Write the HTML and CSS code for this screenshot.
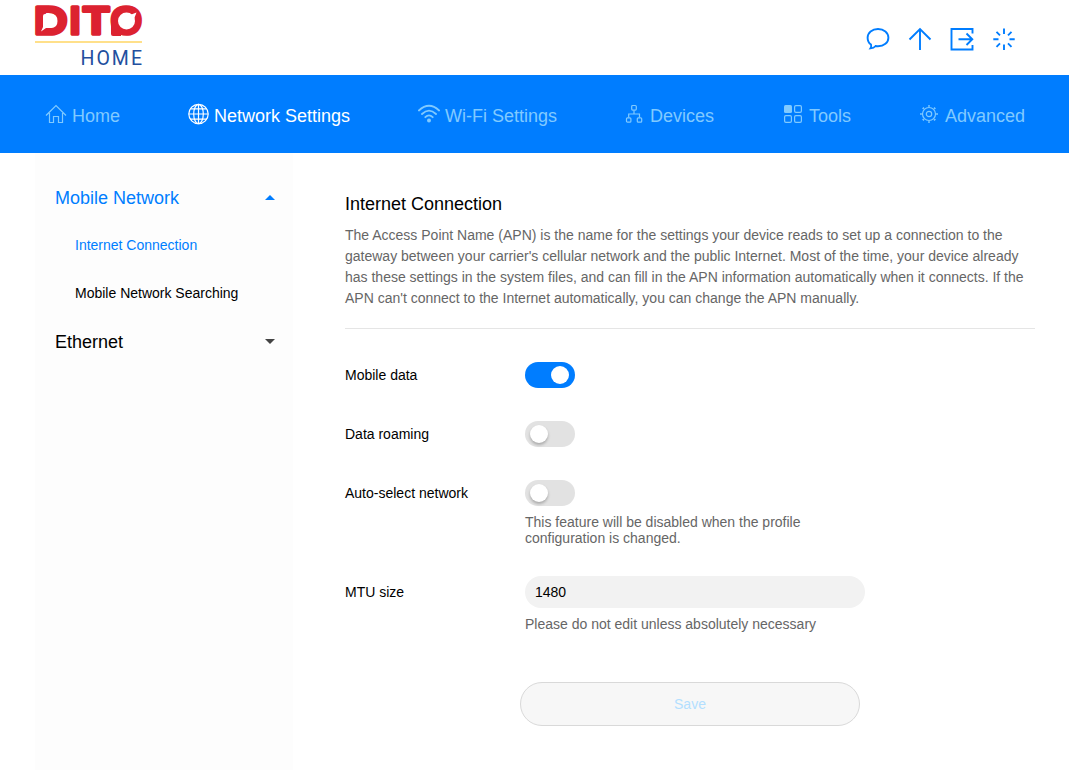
FILE: index.html
```html
<!DOCTYPE html>
<html lang="en">
<head>
    <meta charset="UTF-8">
    <meta name="viewport" content="width=device-width, initial-scale=1.0">
    <title>DITO Home</title>
    <link rel="stylesheet" href="styles.css">
</head>
<body>
    <header class="header">
        <svg class="logo" width="112" height="72" viewBox="33 0 112 72">
            <g class="logo-name">
                <text x="34.300" y="34.300" textLength="33" lengthAdjust="spacingAndGlyphs">D</text>
                <text x="69.800" y="34.300">I</text>
                <text x="83.300" y="34.300" textLength="25.900" lengthAdjust="spacingAndGlyphs">T</text>
                <text x="110.700" y="34.300" textLength="31" lengthAdjust="spacingAndGlyphs">O</text>
            </g>
            <!-- speech bubble in the D, clock in the O -->
            <path class="logo-corner" d="M111 21H121V36H113Q111 36 111 34Z"/>
            <path class="logo-hole" d="M45 14H51Q57.500 14 57.500 21T51 28H46L41 31.500L43 27V16Q43 14 45 14Z"/>
            <circle class="logo-hole" cx="126.500" cy="21" r="8.500"/>
            <path class="logo-hole" d="M130 15L136.500 12.500L134 19Z"/>
            <path class="logo-line" d="M35 42H142"/>
            <text class="logo-sub" x="80.500" y="64.500" textLength="61.500">HOME</text>
        </svg>
        <div class="header-icons">
            <svg width="24" height="24" viewBox="0 0 24 24"><path d="M5 17.600C2.700 15.900 1.600 13.500 1.600 10.700C1.600 5.700 6.100 2 12 2S22.400 5.700 22.400 10.700S17.900 19.200 12 19.200C11.200 19.200 10.400 19.100 9.600 19C8.200 20.700 6.500 21.300 4.500 21.400C5.200 20.400 5.400 19 5 17.600Z"/></svg>
            <svg width="24" height="24" viewBox="0 0 24 24"><path d="M12 23V2M1.500 12.500L12 2L22.500 12.500"/></svg>
            <svg width="24" height="24" viewBox="0 0 24 24"><path d="M22.500 6.500V2H1.500V22.500H22.500V18M8.500 12.300H22M16.500 6.500L22.300 12.300L16.500 18"/></svg>
            <svg width="24" height="24" viewBox="0 0 24 24"><path d="M12 1.500V7M12 17.500V23M1.300 12.300H6.500M17.500 12.300H22.700M4.500 4.800L8 8.300M16 16.300L19.500 19.800M19.500 4.800L16 8.300M8 16.300L4.500 19.800"/></svg>
        </div>
    </header>

    <nav class="nav">
        <a class="nav-item">
            <svg width="22" height="20" viewBox="0 0 22 20"><path d="M1 11.500L11 1.500L21 11.500M4.500 9V18.500H8.500V12.500H13.500V18.500H17.500V9"/></svg>
            <span>Home</span>
        </a>
        <a class="nav-item active">
            <svg width="21" height="22" viewBox="0 0 21 22"><circle cx="10.500" cy="11" r="9.700"/><ellipse cx="10.500" cy="11" rx="4.800" ry="9.700"/><path d="M10.500 1.300V20.700M.8 11H20.200M2.500 5.800H18.500M2.500 16.200H18.500"/></svg>
            <span>Network Settings</span>
        </a>
        <a class="nav-item">
            <svg width="22" height="20" viewBox="0 0 22 20"><path class="wave" d="M.9 6.500Q11-3 21.100 6.500M4 10Q11 3.200 18 10M7.300 13.200Q11 9.500 14.700 13.200"/><circle class="fill" cx="11" cy="16.500" r="2"/></svg>
            <span>Wi-Fi Settings</span>
        </a>
        <a class="nav-item small devices">
            <svg width="18" height="20" viewBox="0 0 18 20"><rect x="6.700" y="1.500" width="4.600" height="4.600" rx="1"/><rect x="1.500" y="13.800" width="4.400" height="4.400" rx="1"/><rect x="12.300" y="13.800" width="4.400" height="4.400" rx="1"/><path d="M9 6.500V10M3.700 13.500V10H14.500V13.500"/></svg>
            <span>Devices</span>
        </a>
        <a class="nav-item small tools">
            <svg width="18" height="20" viewBox="0 0 18 20"><rect class="fill" x="0" y="1" width="8" height="8" rx="1.500"/><rect x="10.600" y="1.600" width="6.800" height="6.800" rx="1.300"/><rect x=".6" y="11.600" width="6.800" height="6.800" rx="1.300"/><rect x="10.600" y="11.600" width="6.800" height="6.800" rx="1.300"/></svg>
            <span>Tools</span>
        </a>
        <a class="nav-item small">
            <svg width="18" height="20" viewBox="0 0 18 20"><circle cx="9" cy="10" r="6.500"/><circle cx="9" cy="10" r="2.700"/><circle class="teeth" cx="9" cy="10" r="8" pathLength="80"/></svg>
            <span>Advanced</span>
        </a>
    </nav>

    <div class="main">
        <aside class="sidebar">
            <div class="menu open"><span>Mobile Network</span><i class="arrow up"></i></div>
            <a class="submenu active">Internet Connection</a>
            <a class="submenu">Mobile Network Searching</a>
            <div class="menu"><span>Ethernet</span><i class="arrow down"></i></div>
        </aside>

        <section class="content">
            <h1>Internet Connection</h1>
            <p class="description">The Access Point Name (APN) is the name for the settings your device reads to set up a connection to the gateway between your carrier's cellular network and the public Internet. Most of the time, your device already has these settings in the system files, and can fill in the APN information automatically when it connects. If the APN can't connect to the Internet automatically, you can change the APN manually.</p>

            <div class="row">
                <span class="label">Mobile data</span>
                <button class="switch on" aria-label="Mobile data"></button>
            </div>
            <div class="row">
                <span class="label">Data roaming</span>
                <button class="switch" aria-label="Data roaming"></button>
            </div>
            <div class="row auto">
                <span class="label">Auto-select network</span>
                <div class="field">
                    <button class="switch" aria-label="Auto-select network"></button>
                    <p class="note">This feature will be disabled when the profile configuration is changed.</p>
                </div>
            </div>
            <div class="row mtu">
                <label class="label" for="mtu">MTU size</label>
                <div class="field">
                    <input type="text" id="mtu" value="1480">
                    <p class="note">Please do not edit unless absolutely necessary</p>
                </div>
            </div>
            <button class="save" disabled>Save</button>
        </section>
    </div>

    <script>
        // Flip a switch when it is clicked
        document.querySelectorAll('.switch').forEach(item => {
            item.addEventListener('click', () => item.classList.toggle('on'));
        });
    </script>
</body>
</html>
```
FILE: styles.css
```css
:root {
    --primary: #007dff;
    --text: #000;
    --muted: #666;
}

* {
    margin: 0;
    padding: 0;
    box-sizing: border-box;
    font-family: "Liberation Sans", Arial, sans-serif;
}

body {
    background: #fff;
    color: var(--text);
    font-size: 14px;
    height: 100vh;
    display: flex;
    flex-direction: column;
    overflow: hidden;
}

svg {
    fill: none;
    stroke: currentColor;
    flex-shrink: 0;
}

.header {
    height: 75px;
    flex-shrink: 0;
    padding: 0 53px 0 33px;
    display: flex;
    justify-content: space-between;
}

.logo {
    stroke: none;
    overflow: visible;
}

.logo-name text {
    font-size: 38px;
    font-weight: 700;
    fill: #dc2230;
    stroke: #dc2230;
    stroke-width: 3.5px;
    stroke-linejoin: round;
}

.logo-corner {
    fill: #dc2230;
}

.logo-hole {
    fill: #fff;
}

.logo-line {
    stroke: #ffe08a;
    stroke-width: 2;
}

.logo-sub {
    font-family: Roboto, sans-serif;
    font-size: 19.5px;
    fill: #234f9e;
}

.header-icons {
    display: flex;
    gap: 18px;
    padding-top: 27px;
    color: var(--primary);
    stroke-width: 1.9;
}

.nav {
    height: 78px;
    flex-shrink: 0;
    padding: 0 44px 0 45px;
    background: var(--primary);
    display: flex;
    justify-content: space-between;
    align-items: center;
    font-size: 18px;
    color: #80caff;
}

.nav-item {
    display: flex;
    align-items: center;
    gap: 5px;
    padding-top: 4px;
    cursor: pointer;
}

.nav-item svg {
    stroke-width: 1.2;
    margin-top: -4px;
}

.nav-item.small {
    gap: 7px;
}

.nav-item.devices {
    margin-right: 2px;
}

.nav-item.tools {
    margin-right: 1px;
}

.nav-item.active {
    color: #fff;
}

.nav .fill {
    fill: currentColor;
    stroke: none;
}

.nav .wave {
    stroke-width: 1.8;
    stroke-linecap: round;
}

.nav .teeth {
    stroke-width: 1.6;
    stroke-dasharray: 3 7;
    stroke-dashoffset: 1.5;
}

.main {
    flex: 1;
    display: flex;
    padding-left: 35px;
}

.sidebar {
    width: 258px;
    padding: 20px 18px 0 20px;
    background: #fdfdfd;
}

.menu {
    height: 48px;
    display: flex;
    align-items: center;
    justify-content: space-between;
    font-size: 18px;
    cursor: pointer;
}

.menu span {
    padding-top: 2px;
}

.menu.open,
.submenu.active {
    color: var(--primary);
}

.arrow {
    border: 5px solid transparent;
}

.arrow.up {
    border-top: 0;
    border-bottom-color: var(--primary);
}

.arrow.down {
    border-bottom: 0;
    border-top-color: #444;
}

.submenu {
    height: 48px;
    padding-left: 20px;
    display: flex;
    align-items: center;
    cursor: pointer;
}

.content {
    width: 690px;
    margin-left: 52px;
    padding-top: 40px;
}

h1 {
    font-size: 18px;
    font-weight: 400;
    line-height: 22px;
}

.description {
    padding: 10px 0 19px;
    border-bottom: 1px solid #e5e5e5;
    color: var(--muted);
    line-height: 21px;
    margin-bottom: 33px;
}

.row {
    display: flex;
    margin-bottom: 33px;
}

.label {
    width: 180px;
    line-height: 26px;
}

.switch {
    display: flex;
    align-items: center;
    width: 50px;
    height: 26px;
    padding: 0 5px;
    border: none;
    border-radius: 13px;
    background: #e2e2e2;
    cursor: pointer;
}

.switch::before {
    content: "";
    width: 18px;
    height: 18px;
    border-radius: 50%;
    background: #fff;
    box-shadow: 0 2px 3px rgba(0, 0, 0, 0.25);
}

.switch.on {
    background: var(--primary);
}

.switch.on::before {
    margin-left: 21px;
    box-shadow: none;
}

.field {
    width: 340px;
}

.note {
    color: var(--muted);
    line-height: 16px;
    margin-top: 8px;
}

.auto {
    margin-bottom: 30px;
}

.mtu {
    margin-bottom: 50px;
}

.mtu .label {
    line-height: 32px;
}

#mtu {
    display: block;
    width: 340px;
    height: 32px;
    padding: 0 10px;
    border: none;
    border-radius: 16px;
    background: #f2f2f2;
    font-size: 14px;
    outline: none;
}

.save {
    display: block;
    width: 340px;
    height: 44px;
    margin-left: 175px;
    border: 1px solid #d9d9d9;
    border-radius: 22px;
    background: #f7f7f7;
    color: #b3dfff;
    font-size: 14px;
}
```
